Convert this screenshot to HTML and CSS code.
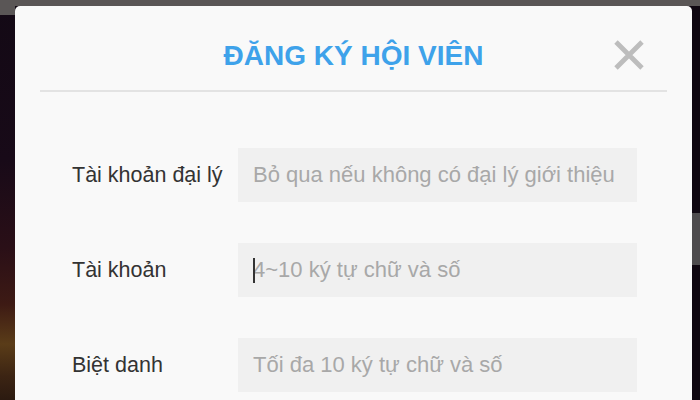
FILE: index.html
```html
<!DOCTYPE html>
<html lang="vi">
<head>
<meta charset="utf-8">
<title>Đăng ký hội viên</title>
<link rel="stylesheet" href="styles.css">
</head>
<body>
<div class="modal">
  <div class="modal-head">
    <h1 class="title">ĐĂNG KÝ HỘI VIÊN</h1>
    <button class="close" aria-label="Đóng">
      <svg width="32" height="30" viewBox="0 0 32 30"><path d="M3 2 L29 28 M29 2 L3 28" stroke="#bdbdbd" stroke-width="4.8" stroke-linecap="butt" fill="none"/></svg>
    </button>
  </div>
  <div class="divider"></div>
  <form class="form">
    <div class="row">
      <label class="label">Tài khoản đại lý</label>
      <span class="field"><input class="input" type="text" placeholder="Bỏ qua nếu không có đại lý giới thiệu"></span>
    </div>
    <div class="row">
      <label class="label">Tài khoản</label>
      <span class="field"><input class="input" type="text" placeholder="4~10 ký tự chữ và số"><span class="caret"></span></span>
    </div>
    <div class="row">
      <label class="label">Biệt danh</label>
      <span class="field"><input class="input" type="text" placeholder="Tối đa 10 ký tự chữ và số"></span>
    </div>
  </form>
</div>
</body>
</html>
```

FILE: styles.css
```css
html, body {
  margin: 0;
  height: 100%;
  overflow: hidden;
}
body {
  font-family: "Liberation Sans", Arial, sans-serif;
  background:
    linear-gradient(#5a5656, #5a5656) left top / 100% 6px no-repeat,
    linear-gradient(#5a5656, #5a5656) left top / 15px 15px no-repeat,
    linear-gradient(#4e4c4e, #4e4c4e) right top 213px / 8px 52px no-repeat,
    linear-gradient(180deg, #130915 0%, #180a18 40%, #2a0f17 62%, #3d1a14 76%, #5a3c18 86%, #3c2413 94%, #2b1a10 100%) left top / 15px 100% no-repeat,
    #100812;
}
.modal {
  margin: 6px 0 0 15px;
  width: 677px;
  height: 420px;
  background: #f9f9f9;
  border-radius: 5px 5px 0 0;
}
.modal-head {
  position: relative;
  height: 84px;
  display: flex;
  align-items: center;
  justify-content: center;
}
.title {
  margin: 16px 0 0;
  font-size: 28px;
  font-weight: bold;
  color: #3ea2ea;
}
.close {
  position: absolute;
  top: 34px;
  right: 47px;
  width: 32px;
  height: 30px;
  padding: 0;
  border: 0;
  background: none;
  display: block;
}
.close svg { display: block; }
.divider {
  margin: 0 25px;
  height: 2px;
  background: #e3e3e3;
}
.form {
  padding: 56px 0 0 57px;
  display: flex;
  flex-direction: column;
  gap: 41px;
}
.row {
  display: flex;
  align-items: center;
}
.label {
  width: 166px;
  font-size: 21.5px;
  color: #333;
}
.field {
  position: relative;
  display: block;
}
.input {
  display: block;
  box-sizing: border-box;
  width: 399px;
  height: 54px;
  padding: 0 15px;
  border: 0;
  outline: none;
  background: #f0f0f0;
  font-family: "Liberation Sans", Arial, sans-serif;
  font-size: 22px;
  color: #333;
}
.input::placeholder {
  color: #a8a8a8;
}
.caret {
  position: absolute;
  left: 15px;
  top: 15px;
  width: 2px;
  height: 25px;
  background: #333;
}
```
